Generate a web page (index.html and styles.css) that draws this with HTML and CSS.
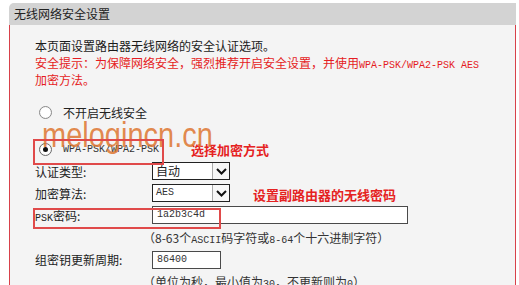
FILE: index.html
```html
<!DOCTYPE html>
<html>
<head>
<meta charset="utf-8">
<link rel="stylesheet" href="styles.css">
</head>
<body>
<div class="frame">
  <div class="head">无线网络安全设置</div>
  <div class="panel">
    <div class="intro">
      <div class="dark">本页面设置路由器无线网络的安全认证选项。</div>
      <div class="red">安全提示：为保障网络安全，强烈推荐开启安全设置，并使用<span class="a">WPA-PSK/WPA2-PSK AES</span></div>
      <div class="red">加密方法。</div>
    </div>
    <div class="radio-row first">
      <span class="radio"></span>
      <span>不开启无线安全</span>
    </div>
    <div class="radio-row second">
      <span class="radio on"></span>
      <span class="a gray">WPA-PSK/WPA2-PSK</span>
      <span class="note note1">选择加密方式</span>
    </div>
    <div class="row">
      <span class="label">认证类型:</span>
      <span class="select"><span class="val">自动</span><span class="btn"><svg width="11" height="7" viewBox="0 0 11 7"><polyline points="1,1 5.5,5.5 10,1" fill="none" stroke="#111" stroke-width="2"/></svg></span></span>
    </div>
    <div class="row">
      <span class="label">加密算法:</span>
      <span class="select"><span class="val a gray">AES</span><span class="btn"><svg width="11" height="7" viewBox="0 0 11 7"><polyline points="1,1 5.5,5.5 10,1" fill="none" stroke="#111" stroke-width="2"/></svg></span></span>
      <span class="note note2">设置副路由器的无线密码</span>
    </div>
    <div class="row">
      <span class="label"><span class="a">PSK</span>密码:</span>
      <span class="input wide a">1a2b3c4d</span>
    </div>
    <div class="hint">（8-63个<span class="a">ASCII</span>码字符或<span class="a">8-64</span>个十六进制字符）</div>
    <div class="row">
      <span class="label">组密钥更新周期:</span>
      <span class="input short a">86400</span>
    </div>
    <div class="hint">（单位为秒，最小值为<span class="a">30</span>，不更新则为<span class="a">0</span>）</div>
  </div>
  <div class="mark">melogincn.cn</div>
  <div class="box box1"></div>
  <div class="box box2"></div>
</div>
</body>
</html>
```
FILE: styles.css
```css
html, body {
  margin: 0;
  padding: 0;
  background: #ffffff;
  overflow: hidden;
}
body {
  font-family: "Noto Sans CJK SC", "Liberation Sans", sans-serif;
  font-size: 12px;
  color: #222;
}
.frame {
  position: relative;
  margin: 3px 3px 0 9px;
  width: 507px;
}
.head {
  height: 22px;
  line-height: 22px;
  background: #d3d3d3;
  border-top-left-radius: 5px;
  padding-left: 5px;
  color: #222;
  font-size: 12px;
}
.panel {
  background: #f4f4f4;
  border-left: 1px solid #d8414a;
  border-right: 1px solid #d8414a;
  padding: 12px 0 0 25px;
  height: 260px;
}
.intro div {
  line-height: 17px;
  height: 17px;
  white-space: nowrap;
}
.dark { color: #1a1a1a; }
.red { color: #e51c23; }
.a {
  font-family: "Liberation Mono", monospace;
  font-size: 10px;
}
.gray { color: #333; }
.radio-row {
  display: flex;
  align-items: center;
  height: 22px;
}
.radio-row.first { margin-top: 13px; }
.radio-row.second { margin-top: 15px; }
.radio {
  width: 11px;
  height: 11px;
  border: 1px solid #8a8a8a;
  border-radius: 50%;
  background: radial-gradient(circle, #ffffff 55%, #e4e4e4 100%);
  margin: 0 11px 0 4px;
  position: relative;
  flex: none;
}
.radio.on {
  border-color: #6a6a6a;
}
.radio.on::after {
  content: "";
  position: absolute;
  left: 3px;
  top: 3px;
  width: 5px;
  height: 5px;
  border-radius: 50%;
  background: #111;
}
.note {
  color: #e52222;
  font-weight: bold;
  font-size: 13px;
}
.note1 { margin-left: 32px; }
.note2 { margin-left: 23px; margin-top: 3px; }
.row {
  display: flex;
  align-items: center;
  height: 22.2px;
  white-space: nowrap;
}
.label {
  width: 117px;
  flex: none;
  color: #222;
}
.select {
  display: flex;
  align-items: stretch;
  width: 76px;
  height: 16px;
  border: 1px solid #222;
  background: #fff;
}
.select .val {
  flex: 1;
  padding-left: 3px;
  line-height: 16px;
}
.select .btn {
  width: 16px;
  border-left: 1px solid #aaa;
  display: flex;
  align-items: center;
  justify-content: center;
  background: #f7f7f7;
}
.input {
  height: 16px;
  line-height: 16px;
  border: 1px solid #4a4a4a;
  background: #fff;
  padding-left: 4px;
  color: #333;
  box-sizing: content-box;
}
.input.wide { width: 250px; }
.input.short { width: 63px; }
.hint {
  height: 22.2px;
  line-height: 22.2px;
  padding-left: 108px;
  color: #333;
  white-space: nowrap;
}
.mark {
  position: absolute;
  left: 33px;
  top: 120px;
  font-family: "Liberation Sans", sans-serif;
  font-size: 29px;
  line-height: 29px;
  color: rgba(222, 118, 48, 0.85);
  transform: scaleY(1.18);
  transform-origin: 0 25px;
}
.box {
  position: absolute;
  border: 2px solid #e04a4a;
  box-sizing: border-box;
}
.box1 {
  left: 24px;
  top: 136px;
  width: 131px;
  height: 26px;
}
.box2 {
  left: 24px;
  top: 205px;
  width: 188px;
  height: 21px;
}
```
